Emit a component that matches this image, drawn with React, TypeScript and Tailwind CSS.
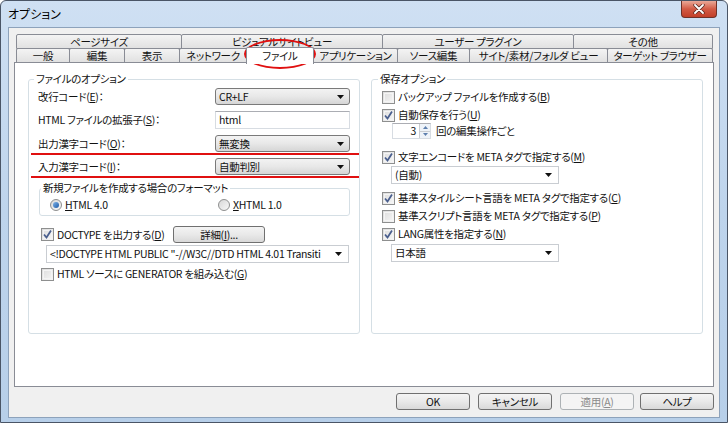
import React from "react";

const Check = ({ checked = false, children }: { checked?: boolean; children: React.ReactNode }) => (
  <div className="flex items-center h-[14px]">
    <span className="relative w-[13px] h-[13px] border border-[#8e8f8f] bg-gradient-to-br from-[#dcdcdc] to-[#f6f6f6] flex items-center justify-center shrink-0">
      <span className="absolute inset-[1px] border border-[#f4f4f4]" />
      {checked && (
        <svg width="11" height="11" viewBox="0 0 11 11" className="relative">
          <path d="M2 5.5 L4.5 8.5 L9 1.5" fill="none" stroke="#4a5f8e" strokeWidth="1.8" />
        </svg>
      )}
    </span>
    <span className="ml-[3px] whitespace-nowrap">{children}</span>
  </div>
);

const Radio = ({ checked = false, children }: { checked?: boolean; children: React.ReactNode }) => (
  <div className="flex items-center h-[14px]">
    <span className="w-[12px] h-[12px] rounded-full border border-[#8e8f8f] bg-gradient-to-br from-[#d8d8d8] to-[#f8f8f8] flex items-center justify-center shrink-0">
      {checked && <span className="w-[6px] h-[6px] rounded-full bg-gradient-to-br from-[#7fb3e8] to-[#1b5aa6]" />}
    </span>
    <span className="ml-[3px] whitespace-nowrap">{children}</span>
  </div>
);

const Arrow = () => (
  <svg width="7" height="4" viewBox="0 0 7 4" className="shrink-0">
    <polygon points="0,0 7,0 3.5,4" fill="#111" />
  </svg>
);

const DropDown = ({ children, className = "" }: { children: React.ReactNode; className?: string }) => (
  <div
    className={`flex items-center h-[17px] pl-[3px] pr-[5px] border border-[#7a7a7a] rounded-[3px] bg-gradient-to-b from-[#f3f3f3] via-[#e8e8e8] to-[#d6d6d6] ${className}`}
  >
    <span className="flex-1 whitespace-nowrap">{children}</span>
    <Arrow />
  </div>
);

const WhiteCombo = ({ children, className = "" }: { children: React.ReactNode; className?: string }) => (
  <div className={`flex items-center h-[18px] pl-[3px] pr-[6px] border border-[#c9cdd2] bg-white ${className}`}>
    <span className="flex-1 whitespace-nowrap">{children}</span>
    <Arrow />
  </div>
);

const Btn = ({ children, className = "" }: { children: React.ReactNode; className?: string }) => (
  <div
    className={`flex items-center justify-center h-[17px] border border-[#707070] rounded-[3px] bg-gradient-to-b from-[#f4f4f4] via-[#e9e9e9] to-[#d9d9d9] ${className}`}
  >
    {children}
  </div>
);

const U = ({ children }: { children: React.ReactNode }) => <span className="underline">{children}</span>;

const Tab = ({ w, label, active = false, first = false }: { w: string; label: string; active?: boolean; first?: boolean }) => (
  <div
    className={`${w} ${first ? "" : "-ml-px"} flex items-center justify-center border border-[#898c95] rounded-t-[2px] whitespace-nowrap ${
      active
        ? "relative z-10 bg-white border-b-0 h-[17px] -mt-[2px] -mb-px"
        : "h-[15px] bg-gradient-to-b from-[#f4f4f4] to-[#e1e1e1]"
    }`}
  >
    {label}
  </div>
);

const GroupLabel = ({ children, className = "" }: { children: React.ReactNode; className?: string }) => (
  <div className={`-mt-[8px] w-fit h-[14px] leading-[14px] px-[2px] bg-white ${className}`}>{children}</div>
);

export default function App() {
  return (
    <div className="relative w-[728px] h-[423px] overflow-hidden flex flex-col px-[7px] pb-[4px] rounded-t-[6px] border border-[#4a5566] bg-gradient-to-b from-[#cfe0f3] via-[#bed4ec] to-[#b7cfe9] text-[#111] text-[10.5px] tracking-[-0.3px] leading-[14px] font-['Noto_Sans_CJK_JP',sans-serif] [font-feature-settings:'palt']">
      {/* title bar */}
      <div className="h-[26px] flex items-start shrink-0">
        <span className="mt-[6px] text-[12px] tracking-normal text-black">オプション</span>
        <div className="ml-auto mr-[3px] w-[36px] h-[17px] border border-[#6f3128] border-t-0 rounded-b-[4px] bg-gradient-to-b from-[#e9a898] via-[#d25a45] to-[#c23f28] flex items-center justify-center">
          <svg width="12" height="10" viewBox="0 0 12 10">
            <path d="M2 1 L10 9 M10 1 L2 9" stroke="#5a2a22" strokeWidth="3.4" strokeLinecap="round" />
            <path d="M2 1 L10 9 M10 1 L2 9" stroke="#fff" strokeWidth="1.8" strokeLinecap="round" />
          </svg>
        </div>
      </div>

      {/* client */}
      <div className="flex-1 flex flex-col bg-[#f0f0f0] border border-[#8da2bb] pt-[6px] pl-[5px] pr-[5px]">
        {/* tabs */}
        <div className="flex ml-[2px]">
          <Tab first w="w-[166px]" label="ページサイズ" />
          <Tab w="w-[202px]" label="ビジュアルサイトビュー" />
          <Tab w="w-[192px]" label="ユーザー プラグイン" />
          <Tab w="w-[140px]" label="その他" />
        </div>
        <div className="flex ml-[2px] -mt-px h-[15px] items-end">
          <Tab first w="w-[54px]" label="一般" />
          <Tab w="w-[56px]" label="編集" />
          <Tab w="w-[56px]" label="表示" />
          <Tab w="w-[68px]" label="ネットワーク" />
          <Tab w="w-[68px]" label="ファイル" active />
          <Tab w="w-[85px]" label="アプリケーション" />
          <Tab w="w-[73px]" label="ソース編集" />
          <Tab w="w-[139px]" label="サイト/素材/フォルダ ビュー" />
          <Tab w="w-[106px]" label="ターゲット ブラウザー" />
        </div>

        {/* panel */}
        <div className="h-[325px] -mt-px bg-white border border-[#898c95] flex pt-[16px] pl-[13px]">
          {/* left group */}
          <div className="w-[332px] h-[255px] border border-[#d5dfe5] rounded-[3px] flex flex-col px-[9px]">
            <GroupLabel className="-ml-[4px]">ファイルのオプション</GroupLabel>
            <div className="mt-[2px] flex items-center justify-between">
              <span>
                改行コード(<U>E</U>)：
              </span>
              <DropDown className="w-[135px]">CR+LF</DropDown>
            </div>
            <div className="mt-[6px] flex items-center justify-between">
              <span>
                HTML ファイルの拡張子(<U>S</U>)：
              </span>
              <div className="w-[135px] h-[18px] border border-[#d7dce2] border-t-[#abadb3] bg-white pl-[3px] flex items-center">html</div>
            </div>
            <div className="mt-[6px] flex items-center justify-between">
              <span>
                出力漢字コード(<U>O</U>)：
              </span>
              <DropDown className="w-[135px]">無変換</DropDown>
            </div>
            <div className="mt-[6px] flex items-center justify-between">
              <span>
                入力漢字コード(<U>I</U>)：
              </span>
              <DropDown className="w-[135px]">自動判別</DropDown>
            </div>

            {/* format group */}
            <div className="mt-[13px] ml-px w-[311px] border border-[#d5dfe5] rounded-[3px] flex flex-col pb-[3px]">
              <GroupLabel className="ml-[1px]">新規ファイルを作成する場合のフォーマット</GroupLabel>
              <div className="mt-[3px] flex">
                <div className="ml-[10px] w-[168px]">
                  <Radio checked>
                    <U>H</U>TML 4.0
                  </Radio>
                </div>
                <Radio>
                  <U>X</U>HTML 1.0
                </Radio>
              </div>
            </div>

            <div className="mt-[10px] flex items-center">
              <div className="ml-[3px] w-[132px]">
                <Check checked>
                  DOCTYPE を出力する(<U>D</U>)
                </Check>
              </div>
              <Btn className="w-[92px] h-[16px]">
                詳細(<U>I</U>)...
              </Btn>
            </div>
            <WhiteCombo className="mt-[2px] ml-[8px] h-[17px] w-[303px]">
              {'<!DOCTYPE HTML PUBLIC "-//W3C//DTD HTML 4.01 Transiti'}
            </WhiteCombo>
            <div className="mt-[4px] ml-[3px]">
              <Check>
                HTML ソースに GENERATOR を組み込む(<U>G</U>)
              </Check>
            </div>
          </div>

          {/* right group */}
          <div className="ml-[11px] w-[332px] h-[255px] border border-[#d5dfe5] rounded-[3px] flex flex-col px-[10px]">
            <GroupLabel className="-ml-[4px]">保存オプション</GroupLabel>
            <div className="mt-[4px]">
              <Check>
                バックアップ ファイルを作成する(<U>B</U>)
              </Check>
            </div>
            <div className="mt-[4px]">
              <Check checked>
                自動保存を行う(<U>U</U>)
              </Check>
            </div>
            <div className="mt-[1px] flex items-center ml-[10px]">
              <div className="w-[39px] h-[16px] border border-[#d7dce2] border-t-[#abadb3] bg-white flex items-center">
                <span className="flex-1 text-right pr-[3px]">3</span>
                <div className="w-[11px] h-full flex flex-col border-l border-[#c9cdd2]">
                  <div className="flex-1 flex items-center justify-center bg-[#eef3f9] border-b border-[#c9cdd2]">
                    <svg width="5" height="3" viewBox="0 0 5 3">
                      <polygon points="0,3 5,3 2.5,0" fill="#5d7fae" />
                    </svg>
                  </div>
                  <div className="flex-1 flex items-center justify-center bg-[#eef3f9]">
                    <svg width="5" height="3" viewBox="0 0 5 3">
                      <polygon points="0,0 5,0 2.5,3" fill="#5d7fae" />
                    </svg>
                  </div>
                </div>
              </div>
              <span className="ml-[5px]">回の編集操作ごと</span>
            </div>
            <div className="mt-[11px]">
              <Check checked>
                文字エンコードを META タグで指定する(<U>M</U>)
              </Check>
            </div>
            <WhiteCombo className="mt-[2px] ml-[9px] w-[168px]">(自動)</WhiteCombo>
            <div className="mt-[7px]">
              <Check checked>
                基準スタイルシート言語を META タグで指定する(<U>C</U>)
              </Check>
            </div>
            <div className="mt-[4px]">
              <Check>
                基準スクリプト言語を META タグで指定する(<U>P</U>)
              </Check>
            </div>
            <div className="mt-[4px]">
              <Check checked>
                LANG属性を指定する(<U>N</U>)
              </Check>
            </div>
            <WhiteCombo className="mt-[3px] ml-[9px] w-[168px]">日本語</WhiteCombo>
          </div>
        </div>

        {/* buttons */}
        <div className="mt-[6px] flex justify-end">
          <Btn className="w-[74px] border-[#3c7fb1]">OK</Btn>
          <Btn className="ml-[8px] w-[74px]">キャンセル</Btn>
          <div className="ml-[8px] w-[74px] h-[17px] flex items-center justify-center border border-[#adb2b5] rounded-[3px] bg-[#f4f4f4] text-[#8a8a8a]">
            適用(<U>A</U>)
          </div>
          <Btn className="ml-[6px] w-[74px]">ヘルプ</Btn>
        </div>
      </div>

      {/* red annotation */}
      <div className="absolute left-[243px] top-[38px] w-[72px] h-[30px] rounded-[50%] border-2 border-[#e01010] pointer-events-none" />
      <div className="absolute left-[30px] top-[152px] w-[328px] h-[2px] bg-[#e01010]" />
      <div className="absolute left-[30px] top-[175px] w-[328px] h-[2px] bg-[#e01010]" />
    </div>
  );
}
